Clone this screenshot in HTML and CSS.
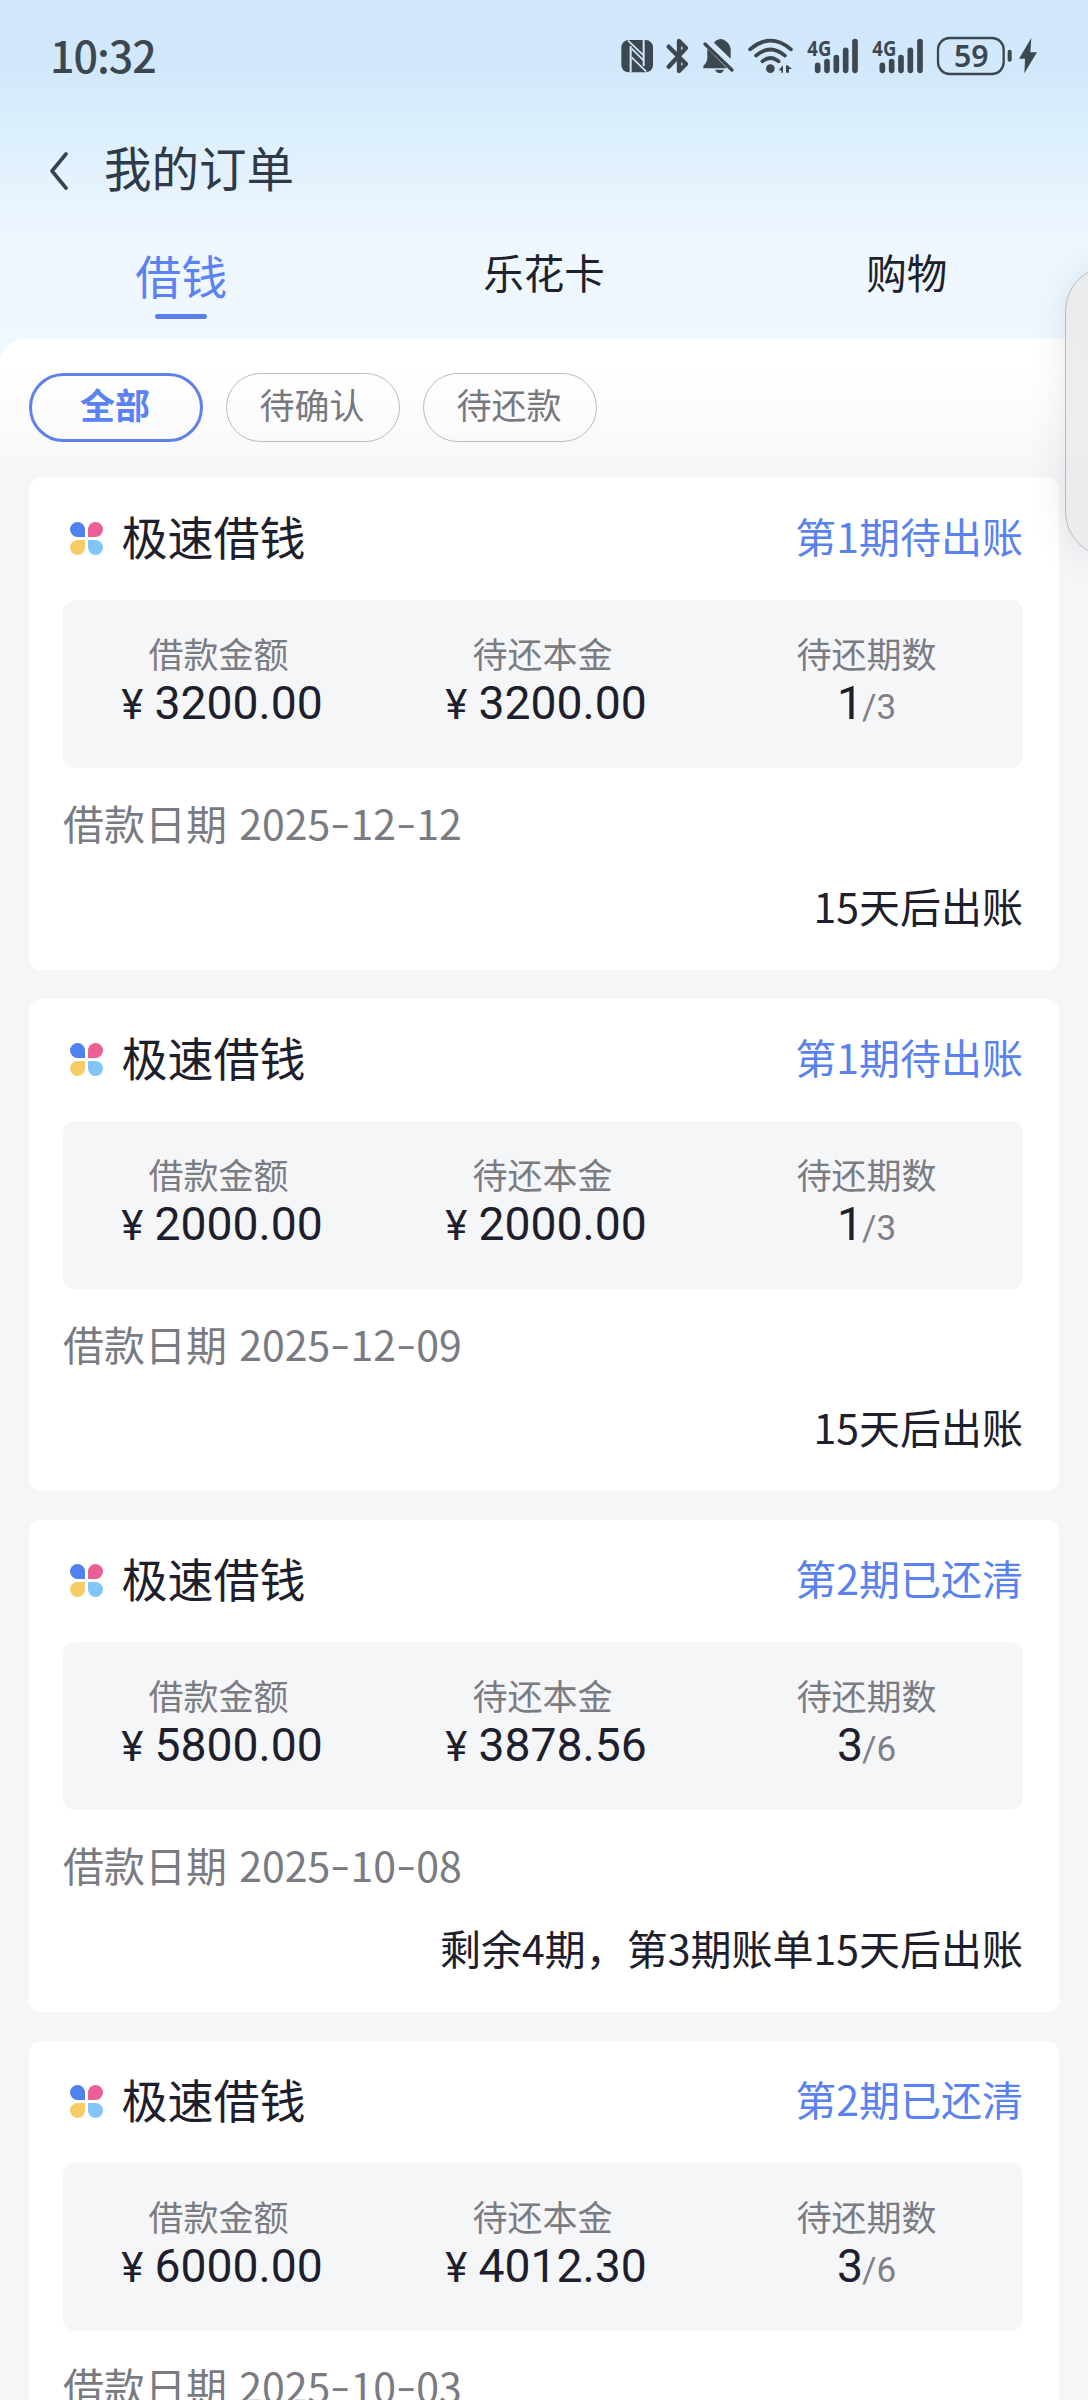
FILE: index.html
```html
<!DOCTYPE html>
<html lang="zh-CN">
<head>
<meta charset="utf-8">
<title>我的订单</title>
<link rel="stylesheet" href="styles.css">
</head>
<body>
<div class="screen">
  <header class="header">
    <div class="statusbar">
      <span class="clock">10:32</span>
      <svg class="status-icons" viewBox="0 0 1464 240" fill="none" stroke-linecap="round" stroke-linejoin="round">
        <!-- NFC -->
        <rect x="64" y="60" width="95" height="97" rx="22" fill="#3c474f"/>
        <path d="M92 157V78M131 60V138" stroke="#d1e7fb" stroke-width="6" stroke-linecap="butt"/>
        <path d="M84 62L131 106M95 86L131 122M95 112L139 155" stroke="#d1e7fb" stroke-width="5" stroke-linecap="butt"/>
        <!-- Bluetooth -->
        <path d="M206 80L258 132L237 153V63L258 84L206 140" stroke="#3c474f" stroke-width="13"/>
        <!-- Muted bell -->
        <path d="M347 62q18-12 33 3q13 12 12 28v23L342 68zM322 86L381 145H310v-8q12-10 12-24zM345 149h27q-4 10-13 10t-14-10z" fill="#3c474f"/>
        <path d="M315 72L396 150" stroke="#3c474f" stroke-width="10"/>
        <!-- Wi-Fi -->
        <g stroke="#3c474f" stroke-width="11">
          <path d="M450 88Q511 36 573 88"/><path d="M468 107Q511 70 555 107"/><path d="M487 124Q511 104 536 124"/>
        </g>
        <circle cx="511" cy="146" r="13" fill="#3c474f"/>
        <path d="M536 151l13-15v22h-5v-7zM558 136h5l13 11h-9v11h-9z" fill="#3c474f"/>
        <!-- Cellular signals -->
        <g stroke="#3c474f" stroke-width="17">
          <path d="M653 136v15M681 125v26M709 113v38M737 91v60M765 65v86"/>
          <path d="M847 136v15M875 125v26M903 113v38M931 91v60M960 65v86"/>
        </g>
        <g class="net" fill="#3c474f">
          <text x="622" y="107" textLength="72" lengthAdjust="spacingAndGlyphs">4G</text>
          <text x="817" y="107" textLength="72" lengthAdjust="spacingAndGlyphs">4G</text>
        </g>
        <!-- Battery -->
        <rect x="1014" y="54" width="197" height="108" rx="35" stroke="#3c474f" stroke-width="7"/>
        <path d="M1229 95v24" stroke="#3c474f" stroke-width="12"/>
        <text class="level" x="1114" y="142" text-anchor="middle" textLength="104" lengthAdjust="spacingAndGlyphs" fill="#3c474f">59</text>
        <path d="M1294 54L1257 116H1275L1273 160L1311 97H1291Z" fill="#3c474f"/>
      </svg>
    </div>
    <div class="navbar">
      <svg class="back" viewBox="0 0 20 38" fill="none"><path d="M17 2L3 19L17 36" stroke="#38434f" stroke-width="3.6" stroke-linecap="round" stroke-linejoin="round"/></svg>
      <h1 class="title">我的订单</h1>
    </div>
    <nav class="tabs">
      <a class="tab tab-active">借钱</a>
      <a class="tab">乐花卡</a>
      <a class="tab">购物</a>
    </nav>
  </header>

  <main class="content">
    <div class="filters">
      <span class="pill pill-active">全部</span>
      <span class="pill">待确认</span>
      <span class="pill">待还款</span>
    </div>

    <section class="orders">
      <article class="card">
        <div class="card-head">
          <span class="petals"><i class="blue"></i><i class="pink"></i><i class="gold"></i><i class="sky"></i></span>
          <h2 class="name">极速借钱</h2>
          <span class="state">第1期待出账</span>
        </div>
        <div class="figures">
          <div class="figure"><span class="label">借款金额</span><span class="amount"><small class="yen">¥</small>3200.00</span></div>
          <div class="figure"><span class="label">待还本金</span><span class="amount"><small class="yen">¥</small>3200.00</span></div>
          <div class="figure"><span class="label">待还期数</span><span class="amount periods">1<small class="total">/3</small></span></div>
        </div>
        <p class="date">借款日期 2025<i>-</i>12<i>-</i>12</p>
        <p class="note">15天后出账</p>
      </article>

      <article class="card">
        <div class="card-head">
          <span class="petals"><i class="blue"></i><i class="pink"></i><i class="gold"></i><i class="sky"></i></span>
          <h2 class="name">极速借钱</h2>
          <span class="state">第1期待出账</span>
        </div>
        <div class="figures">
          <div class="figure"><span class="label">借款金额</span><span class="amount"><small class="yen">¥</small>2000.00</span></div>
          <div class="figure"><span class="label">待还本金</span><span class="amount"><small class="yen">¥</small>2000.00</span></div>
          <div class="figure"><span class="label">待还期数</span><span class="amount periods">1<small class="total">/3</small></span></div>
        </div>
        <p class="date">借款日期 2025<i>-</i>12<i>-</i>09</p>
        <p class="note">15天后出账</p>
      </article>

      <article class="card">
        <div class="card-head">
          <span class="petals"><i class="blue"></i><i class="pink"></i><i class="gold"></i><i class="sky"></i></span>
          <h2 class="name">极速借钱</h2>
          <span class="state">第2期已还清</span>
        </div>
        <div class="figures">
          <div class="figure"><span class="label">借款金额</span><span class="amount"><small class="yen">¥</small>5800.00</span></div>
          <div class="figure"><span class="label">待还本金</span><span class="amount"><small class="yen">¥</small>3878.56</span></div>
          <div class="figure"><span class="label">待还期数</span><span class="amount periods">3<small class="total">/6</small></span></div>
        </div>
        <p class="date">借款日期 2025<i>-</i>10<i>-</i>08</p>
        <p class="note">剩余4期，第3期账单15天后出账</p>
      </article>

      <article class="card">
        <div class="card-head">
          <span class="petals"><i class="blue"></i><i class="pink"></i><i class="gold"></i><i class="sky"></i></span>
          <h2 class="name">极速借钱</h2>
          <span class="state">第2期已还清</span>
        </div>
        <div class="figures">
          <div class="figure"><span class="label">借款金额</span><span class="amount"><small class="yen">¥</small>6000.00</span></div>
          <div class="figure"><span class="label">待还本金</span><span class="amount"><small class="yen">¥</small>4012.30</span></div>
          <div class="figure"><span class="label">待还期数</span><span class="amount periods">3<small class="total">/6</small></span></div>
        </div>
        <p class="date">借款日期 2025<i>-</i>10<i>-</i>03</p>
      </article>
    </section>
  </main>
  <div class="side-handle"></div>
</div>
</body>
</html>
```
FILE: styles.css
```css
* { box-sizing: border-box; margin: 0; padding: 0; }

body {
  background: #f5f6f8;
  color: #1d202c;
  font-family: "Noto Sans CJK SC", "Noto Sans", sans-serif;
}

h1, h2 { font-weight: 400; }

.screen {
  position: relative;
  width: 1088px;
  height: 2400px;
  overflow: hidden;
  background: linear-gradient(#d0e6fb 0, #d2e8fb 75px, #d8edfb 105px, #ddf0fd 140px, #e7f3fe 195px, #eef6fe 240px, #f0f7ff 339px);
}

.statusbar {
  display: flex;
  justify-content: space-between;
  height: 114px;
  padding-left: 50px;
}

.clock {
  color: #3c474f;
  font-size: 43px;
  font-weight: 500;
  line-height: 60px;
  padding-top: 24px;
  letter-spacing: -1px;
}

.status-icons { width: 488px; height: 80px; margin-top: 20px; }
.net { font: 700 66px "Noto Sans", sans-serif; }
.level { font: 600 94px "Noto Sans", sans-serif; }

.navbar {
  display: flex;
  align-items: center;
  height: 110px;
  padding-left: 49px;
}

.back { width: 20px; height: 38px; margin-top: 4px; }

.title {
  margin-left: 35px;
  padding-bottom: 4px;
  color: #2f3a48;
  font-size: 47.5px;
  line-height: 60px;
}

.tabs { display: flex; height: 115px; }

.tab {
  flex: 1;
  display: flex;
  flex-direction: column;
  align-items: center;
  color: #1c212c;
  font-size: 40.5px;
  line-height: 60px;
  padding-top: 18px;
}

.tab-active { color: #5a82f2; font-size: 46px; padding-top: 20px; }

.tab-active::after {
  content: "";
  width: 52px;
  height: 5px;
  margin-top: 10px;
  border-radius: 3px;
  background: #5a82ec;
}

.content {
  border-radius: 24px 24px 0 0;
  background: linear-gradient(#fff 0, #fff 30px, #fbfbfc 85px, #f5f6f8 135px);
}

.filters { display: flex; gap: 23px; padding: 34px 29px 36px; }

.pill {
  width: 174px;
  height: 69px;
  padding-right: 2px;
  border: 1px solid #b9bbc0;
  border-radius: 35px;
  color: #77787f;
  font-size: 35px;
  line-height: 59px;
  text-align: center;
}

.pill-active {
  border: 3px solid #5f82ea;
  color: #5a82f2;
  font-weight: 700;
  line-height: 55px;
}

.orders { display: flex; flex-direction: column; gap: 29px; padding: 0 29px; }

.card {
  flex: none;
  height: 492px;
  padding: 0 36px 0 34px;
  border-radius: 12px;
  background: #fff;
}

.card-head { display: flex; align-items: center; height: 122px; padding-left: 7px; }

.petals { display: grid; grid-template-columns: 15px 15px; gap: 2.5px; padding-bottom: 1px; }
.petals i { height: 15px; border-radius: 50%; }
.petals .blue { background: #4f82ef; border-bottom-right-radius: 0; }
.petals .pink { background: #ec5f95; border-bottom-left-radius: 0; }
.petals .gold { background: #f5cd64; border-top-right-radius: 0; }
.petals .sky { background: #82c5f8; border-top-left-radius: 0; }

.name { margin-left: 19px; font-size: 46px; line-height: 60px; padding-bottom: 9px; }
.state { margin-left: auto; color: #5a82ef; font-size: 41px; line-height: 60px; padding-bottom: 9px; }

.figures {
  display: flex;
  justify-content: space-between;
  height: 168px;
  padding: 28px 49px 0 48px;
  border-radius: 12px;
  background: #f5f6f8;
}

.figure { display: flex; flex-direction: column; align-items: center; width: 215px; }
.label { color: #7a7b83; font-size: 35px; line-height: 50px; }

.amount { padding-left: 7px; font-family: Roboto, "Noto Sans CJK SC", sans-serif; font-size: 46.3px; line-height: 51px; white-space: nowrap; }
.yen { margin-right: 11px; font-size: 42px; }
.periods { padding-left: 0; }
.total { margin-left: -1px; color: #7f8087; font-size: 35px; }

.date { padding-top: 23px; color: #7a7b82; font-size: 41px; line-height: 62px; word-spacing: 3px; }
.date i {
  display: inline-block;
  padding: 0 3px;
  font-style: normal;
  transform: translateY(-2px) scaleX(1.4);
}

.note { padding-top: 21px; font-size: 41px; line-height: 62px; text-align: right; }

/* Translucent edge-panel handle, cut off by the right screen edge */
.side-handle {
  position: absolute;
  top: 266px;
  left: 1065px;
  width: 100px;
  height: 291px;
  border: 1px solid #b9bbbd;
  border-radius: 45px;
  background: rgba(233, 234, 236, 0.88);
  box-shadow: 0 0 36px rgba(60, 70, 80, 0.12);
}
```
